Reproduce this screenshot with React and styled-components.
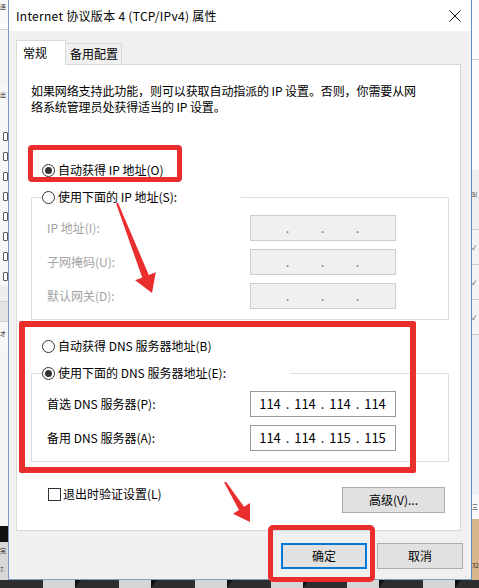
import React from "react";
import styled, { createGlobalStyle } from "styled-components";

const Global = createGlobalStyle`
  html, body { margin: 0; padding: 0; }
  body {
    font-family: "Noto Sans CJK SC", "Noto Sans", sans-serif;
    font-size: 12px;
    color: #000;
  }
  * { box-sizing: border-box; }
`;

const Desktop = styled.div`
  position: relative;
  width: 479px;
  height: 588px;
  overflow: hidden;
  background: #2e2e2e;
`;

const Screen = styled.div`
  display: flex;
  height: 580px;
`;

const SideWindow = styled.div`
  width: ${(p) => p.$w}px;
  flex: none;
  display: flex;
  flex-direction: column;
  overflow: hidden;
  background: #f7f7f7;
`;

const SideBand = styled.div`
  flex: none;
  height: ${(p) => p.$h}px;
  background: ${(p) => p.$bg || "transparent"};
  border-bottom: ${(p) => (p.$line ? "1px solid #cfcfcf" : "none")};
  font-size: 6px;
  line-height: ${(p) => p.$h}px;
  color: ${(p) => p.$fg || "#222"};
  white-space: nowrap;
  display: flex;
  align-items: center;
`;

const SideIcon = styled.span`
  width: 5px;
  height: 9px;
  margin-left: 3px;
  border: 1px solid #555;
  border-radius: 1px;
  background: #fff;
`;

const Dialog = styled.div`
  width: 464px;
  flex: none;
  display: flex;
  flex-direction: column;
  background: #f0f0f0;
  border-left: 1px solid #7a9cc0;
  border-right: 1px solid #5d8fc4;
  border-bottom: 1px solid #7a9cc0;
`;

const TitleBar = styled.div`
  height: 31px;
  flex: none;
  background: #fff;
  display: flex;
  align-items: center;
  justify-content: space-between;
  padding: 0 10px 0 7px;
`;

const Title = styled.span`
  font-size: 12px;
  line-height: 16px;
  letter-spacing: 0.3px;
  white-space: nowrap;
`;

const Body = styled.div`
  flex: 1;
  display: flex;
  flex-direction: column;
  padding: 9px 0 0 7px;
`;

const TabStrip = styled.div`
  display: flex;
  align-items: flex-end;
  height: 24px;
`;

const Tab = styled.div`
  width: ${(p) => p.$w}px;
  height: ${(p) => (p.$active ? 25 : 21)}px;
  margin-bottom: ${(p) => (p.$active ? -1 : 0)}px;
  position: relative;
  z-index: ${(p) => (p.$active ? 1 : 0)};
  background: ${(p) => (p.$active ? "#fff" : "#f0f0f0")};
  border: 1px solid #d9d9d9;
  border-left: ${(p) => (p.$active ? "1px solid #d9d9d9" : "none")};
  border-bottom: none;
  display: flex;
  align-items: center;
  padding-left: ${(p) => p.$pad}px;
  font-size: 12px;
  line-height: 16px;
  white-space: nowrap;
`;

const Panel = styled.div`
  width: 445px;
  height: 467px;
  background: #fff;
  border: 1px solid #d9d9d9;
  padding: 0 12px 0 14px;
  display: flex;
  flex-direction: column;
`;

const Description = styled.p`
  margin: 18px 0 0;
  font-size: 12px;
  line-height: 16px;
  letter-spacing: -0.1px;
  white-space: nowrap;
`;

const OptionRow = styled.div`
  display: flex;
  align-items: center;
  gap: 3px;
  height: 16px;
  margin-top: ${(p) => p.$mt || 0}px;
  padding-left: 11px;
  font-size: 12px;
  line-height: 16px;
  white-space: nowrap;
`;

const RadioCircle = styled.span`
  width: 13px;
  height: 13px;
  flex: none;
  border: 1px solid #333;
  border-radius: 50%;
  background: #fff;
  display: flex;
  align-items: center;
  justify-content: center;
  &::after {
    content: "";
    width: 7px;
    height: 7px;
    border-radius: 50%;
    background: ${(p) => (p.$checked ? "#333" : "transparent")};
  }
`;

const GroupBox = styled.div`
  margin-top: 19px;
  width: 418px;
  border: 1px solid #dcdcdc;
  padding: 0 0 10px 15px;
  display: flex;
  flex-direction: column;
`;

const Legend = styled.div`
  width: ${(p) => p.$w}px;
  height: 16px;
  margin: -9px 0 10px -5px;
  background: #fff;
  display: flex;
  align-items: center;
  gap: 3px;
  font-size: 12px;
  line-height: 16px;
  white-space: nowrap;
`;

const FieldGrid = styled.div`
  display: grid;
  grid-template-columns: 203px 146px;
  row-gap: 8px;
  align-items: center;
`;

const FieldLabel = styled.span`
  font-size: 12px;
  line-height: 16px;
  color: ${(p) => (p.$disabled ? "#a3a3a3" : "#000")};
  white-space: nowrap;
`;

const IpBox = styled.div`
  height: 26px;
  border: 1px solid ${(p) => (p.$disabled ? "#cccccc" : "#9a9a9a")};
  background: ${(p) => (p.$disabled ? "#f0f0f0" : "#fff")};
  display: grid;
  grid-template-columns: 30px 5px 30px 5px 30px 5px 30px;
  align-items: center;
  padding-left: 4px;
  font-size: 13px;
  line-height: 16px;
  color: ${(p) => (p.$disabled ? "#6d6d6d" : "#000")};
`;

const Octet = styled.span`
  text-align: center;
`;

const Dot = styled.span`
  text-align: center;
`;

const BottomRow = styled.div`
  margin-top: 25px;
  display: flex;
  justify-content: space-between;
  align-items: flex-start;
  padding: 0 3px 0 17px;
`;

const CheckOption = styled.div`
  display: flex;
  align-items: center;
  gap: 2px;
  height: 14px;
  font-size: 12px;
  line-height: 16px;
  white-space: nowrap;
`;

const CheckBox = styled.span`
  width: 13px;
  height: 13px;
  flex: none;
  border: 1px solid #333;
  background: #fff;
`;

const Button = styled.button`
  width: ${(p) => p.$w}px;
  height: 26px;
  padding: 0;
  background: #e1e1e1;
  border: 1px solid ${(p) => (p.$default ? "#0078d7" : "#adadad")};
  box-shadow: ${(p) => (p.$default ? "inset 0 0 0 1px #0078d7" : "none")};
  font-family: inherit;
  font-size: 12px;
  line-height: 16px;
  color: #000;
`;

const Footer = styled.div`
  display: flex;
  justify-content: flex-end;
  gap: 10px;
  margin-top: 12px;
  padding-right: 8px;
`;

const Taskbar = styled.div`
  height: 8px;
  display: flex;
  gap: 44px;
  padding-left: 43px;
  background: #2e2e2e;
`;

const TaskTab = styled.span`
  width: 32px;
  height: 8px;
  background: #d6d6d6;
  position: relative;
  &::after {
    content: "";
    position: absolute;
    right: -6px;
    top: 0;
    border-left: 6px solid #111;
    border-bottom: 8px solid transparent;
  }
`;

const RedBox = styled.div`
  position: absolute;
  left: ${(p) => p.$x}px;
  top: ${(p) => p.$y}px;
  width: ${(p) => p.$w}px;
  height: ${(p) => p.$h}px;
  border: ${(p) => p.$b}px solid #ea2e2e;
  border-radius: ${(p) => p.$r}px;
  pointer-events: none;
`;

const ArrowLayer = styled.svg`
  position: absolute;
  left: 0;
  top: 0;
  pointer-events: none;
`;

const IpField = ({ values, disabled }) => {
  const parts = values || ["", "", "", ""];
  return (
    <IpBox $disabled={disabled}>
      <Octet>{parts[0]}</Octet>
      <Dot>.</Dot>
      <Octet>{parts[1]}</Octet>
      <Dot>.</Dot>
      <Octet>{parts[2]}</Octet>
      <Dot>.</Dot>
      <Octet>{parts[3]}</Octet>
    </IpBox>
  );
};

export default function App() {
  return (
    <>
      <Global />
      <Desktop>
        <Screen>
          <SideWindow $w={8}>
            <SideBand $h={14} $bg="#fafafa">连</SideBand>
            <SideBand $h={16} $line $bg="#fafafa" />
            <SideBand $h={56} $bg="#f2f4f6" />
            <SideBand $h={18}>出</SideBand>
            <SideBand $h={22} />
            {[0, 1, 2, 3, 4, 5, 6, 7].map((i) => (
              <SideBand key={i} $h={20}>
                <SideIcon />
              </SideBand>
            ))}
            <SideBand $h={16} $line $bg="#eeeeee" />
            <SideBand $h={20} $line $bg="#e4e4e4" />
            <SideBand $h={24}>才</SideBand>
            <SideBand $h={180} $bg="#f5f5f5" />
            <SideBand $h={16} $bg="#111" />
            <SideBand $h={18} $bg="#d8d8d8">完</SideBand>
            <SideBand $h={20} $bg="#d8d8d8">7.</SideBand>
          </SideWindow>

          <Dialog>
            <TitleBar>
              <Title>Internet 协议版本 4 (TCP/IPv4) 属性</Title>
              <svg width="12" height="12" viewBox="0 0 12 12">
                <path d="M0.5 0.5 L11.5 11.5 M11.5 0.5 L0.5 11.5" stroke="#111" strokeWidth="1" fill="none" />
              </svg>
            </TitleBar>
            <Body>
              <TabStrip>
                <Tab $active $w={50} $pad={6}>常规</Tab>
                <Tab $w={56} $pad={4}>备用配置</Tab>
              </TabStrip>
              <Panel>
                <Description>
                  如果网络支持此功能，则可以获取自动指派的 IP 设置。否则，你需要从网
                  <br />
                  络系统管理员处获得适当的 IP 设置。
                </Description>

                <OptionRow $mt={47}>
                  <RadioCircle $checked />
                  自动获得 IP 地址(O)
                </OptionRow>

                <GroupBox>
                  <Legend $w={199}>
                    <RadioCircle />
                    使用下面的 IP 地址(S):
                  </Legend>
                  <FieldGrid>
                    <FieldLabel $disabled>IP 地址(I):</FieldLabel>
                    <IpField disabled />
                    <FieldLabel $disabled>子网掩码(U):</FieldLabel>
                    <IpField disabled />
                    <FieldLabel $disabled>默认网关(D):</FieldLabel>
                    <IpField disabled />
                  </FieldGrid>
                </GroupBox>

                <OptionRow $mt={18}>
                  <RadioCircle />
                  自动获得 DNS 服务器地址(B)
                </OptionRow>

                <GroupBox>
                  <Legend $w={248}>
                    <RadioCircle $checked />
                    使用下面的 DNS 服务器地址(E):
                  </Legend>
                  <FieldGrid>
                    <FieldLabel>首选 DNS 服务器(P):</FieldLabel>
                    <IpField values={["114", "114", "114", "114"]} />
                    <FieldLabel>备用 DNS 服务器(A):</FieldLabel>
                    <IpField values={["114", "114", "115", "115"]} />
                  </FieldGrid>
                </GroupBox>

                <BottomRow>
                  <CheckOption>
                    <CheckBox />
                    退出时验证设置(L)
                  </CheckOption>
                  <Button $w={103}>高级(V)...</Button>
                </BottomRow>
              </Panel>
              <Footer>
                <Button $w={86} $default>确定</Button>
                <Button $w={86}>取消</Button>
              </Footer>
            </Body>
          </Dialog>

          <SideWindow $w={7}>
            <SideBand $h={60} $line $bg="#fbfbfb" />
            <SideBand $h={110} $bg="#fbfbfb" />
            <SideBand $h={50} $bg="#eef0f2">5(</SideBand>
            <SideBand $h={10} $line $bg="#eef0f2" />
            <SideBand $h={35} $line $bg="#f3f4f5">✓</SideBand>
            <SideBand $h={35} $line $bg="#f3f4f5">✓</SideBand>
            <SideBand $h={35} $line $bg="#f3f4f5">✓</SideBand>
            <SideBand $h={160} $bg="#eef1f4" />
            <SideBand $h={24} $bg="#fafafa">三</SideBand>
            <SideBand $h={33} $bg="#d9b68c" />
            <SideBand $h={28} $bg="#d9b68c">32</SideBand>
          </SideWindow>
        </Screen>
        <Taskbar>
          {[0, 1, 2, 3, 4, 5].map((i) => (
            <TaskTab key={i} />
          ))}
        </Taskbar>

        <RedBox $x={28} $y={145} $w={154} $h={37} $b={5} $r={4} />
        <RedBox $x={19} $y={321} $w={397} $h={152} $b={6} $r={2} />
        <RedBox $x={268} $y={525} $w={107} $h={57} $b={5} $r={5} />

        <ArrowLayer width="479" height="588" viewBox="0 0 479 588">
          <polygon
            fill="#ea2e2e"
            points="116.1,203.4 142.2,277.5 135.2,280.2 152,293 155.8,272.2 148.8,274.9 117.9,202.6"
          />
          <polygon
            fill="#ea2e2e"
            points="224.2,482.5 239,510 233,513.7 250,522 250,503.1 244,506.8 225.8,481.5"
          />
        </ArrowLayer>
      </Desktop>
    </>
  );
}
